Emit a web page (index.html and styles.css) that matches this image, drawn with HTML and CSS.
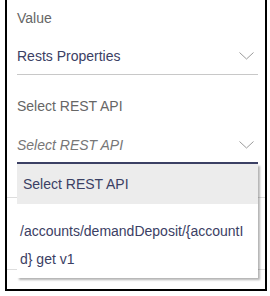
FILE: index.html
```html
<!DOCTYPE html>
<html lang="en">

    <head>
        <meta charset="UTF-8">
        <title>Select REST API</title>
        <link rel="stylesheet" href="styles.css">
    </head>

    <body>
        <div class="frame">

            <div class="field">
                <div class="label">Value</div>
                <div class="select">
                    <span class="value">Rests Properties</span>
                    <svg class="chev" width="15" height="8" viewBox="0 0 15 8"><path d="M0.5 0.5 L7.5 7 L14.5 0.5" fill="none" stroke="#9a9a9a" stroke-width="1"/></svg>
                </div>
            </div>

            <div class="field">
                <div class="label">Select REST API</div>
                <div class="combo">
                    <div class="select active">
                        <span class="placeholder">Select REST API</span>
                        <svg class="chev" width="15" height="8" viewBox="0 0 15 8"><path d="M0.5 0.5 L7.5 7 L14.5 0.5" fill="none" stroke="#9a9a9a" stroke-width="1"/></svg>
                    </div>
                    <div class="menu">
                        <div class="option selected">Select REST API</div>
                        <div class="option">/accounts/demandDeposit/{accountId} get v1</div>
                    </div>
                </div>
            </div>

            <div class="divider first"></div>
            <div class="ghost"></div>
            <div class="divider"></div>

        </div>
    </body>

</html>
```

FILE: styles.css
```css
body {
    margin: 0;
    padding: 0;
    font-family: "Liberation Sans", Arial, sans-serif;
    font-size: 14px;
    background: white;
}

.frame {
    box-sizing: border-box;
    margin-left: 5px;
    width: 262px;
    height: 291px;
    border: 2px solid black;
    border-top: none;
    padding: 10px 7px 0 10px;
}

.label {
    color: #666;
    height: 17px;
    line-height: 17px;
}

.select {
    display: flex;
    justify-content: space-between;
    align-items: center;
    height: 37px;
    padding-top: 10px;
    border-bottom: 1px solid #c8c8c8;
    margin-bottom: 23px;
}

.combo {
    position: relative;
}

.select.active {
    border-bottom: 2px solid #3b4064;
    height: 35px;
    padding-top: 12px;
    margin-bottom: 0;
}

.value {
    color: #3b4064;
}

.placeholder {
    color: #777;
    font-style: italic;
}

.chev {
    margin-right: 4px;
}

.menu {
    position: absolute;
    top: 100%;
    left: 0;
    width: 241px;
    background: white;
    box-shadow: 2px 2px 2px rgba(0, 0, 0, 0.3);
    z-index: 2;
}

.option {
    color: #3b4064;
    padding: 13px 5px 5px 3px;
    line-height: 28px;
    word-break: break-all;
}

.option.selected {
    background: #ececec;
    padding: 6px 6px;
}

.divider {
    border-top: 1px solid #ddd;
    margin: 0 -7px 0 -10px;
}

.divider.first {
    margin-top: 33px;
}

.ghost {
    height: 71px;
}
```
